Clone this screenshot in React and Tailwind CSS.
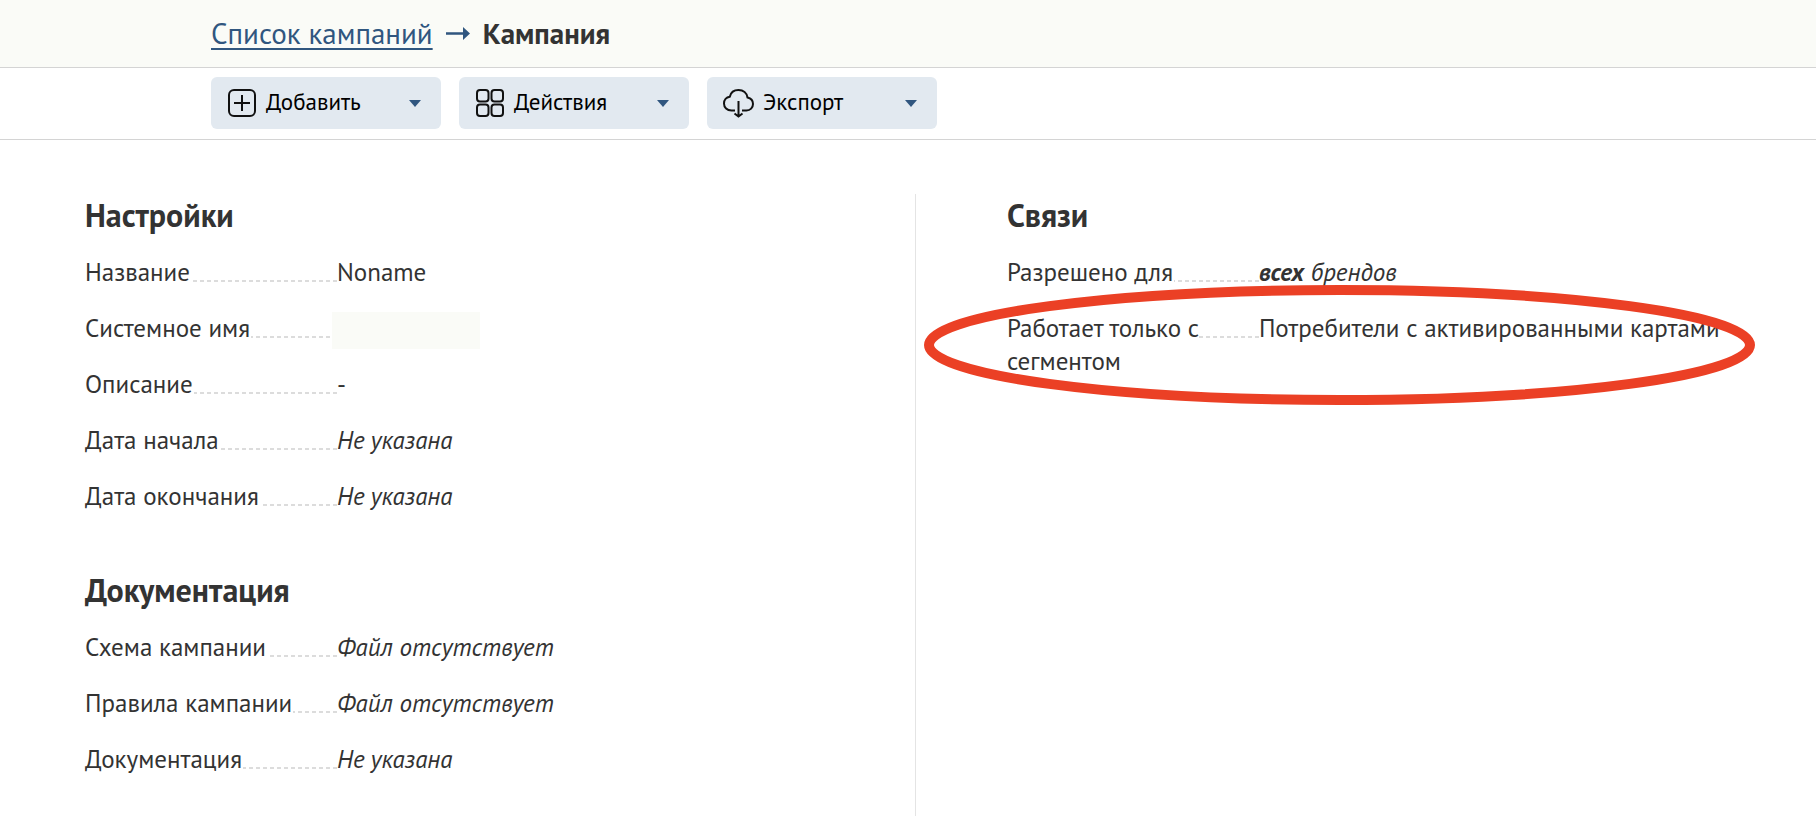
const settings = [
  { label: 'Название', value: 'Noname' },
  { label: 'Системное имя', hidden: true },
  { label: 'Описание', value: '-' },
  { label: 'Дата начала', value: <i>Не указана</i> },
  { label: 'Дата окончания', value: <i>Не указана</i> },
]

const docs = [
  { label: 'Схема кампании', value: <i>Файл отсутствует</i> },
  { label: 'Правила кампании', value: <i>Файл отсутствует</i> },
  { label: 'Документация', value: <i>Не указана</i> },
]

const links = [
  { label: 'Разрешено для', value: <i><b>всех</b> брендов</i> },
  {
    label: 'Работает только с сегментом',
    value: 'Потребители с активированными картами',
    marked: true,
  },
]

function AddIcon() {
  return (
    <svg width="30" height="30" viewBox="0 0 30 30" fill="none" stroke="#111" strokeWidth="2">
      <rect x="2" y="2" width="26" height="26" rx="5" />
      <path d="M15 7v16M7 15h16" />
    </svg>
  )
}

function GridIcon() {
  return (
    <svg width="30" height="30" viewBox="0 0 30 30" fill="none" stroke="#111" strokeWidth="2">
      <rect x="2" y="2" width="11.5" height="11.5" rx="3" />
      <rect x="16.5" y="2" width="11.5" height="11.5" rx="3" />
      <rect x="2" y="16.5" width="11.5" height="11.5" rx="3" />
      <rect x="16.5" y="16.5" width="11.5" height="11.5" rx="3" />
    </svg>
  )
}

function CloudIcon() {
  return (
    <svg width="31" height="30" viewBox="0 0 31 30" fill="none" stroke="#111" strokeWidth="2">
      <path d="M12 22.500H8.500C4 22.500 1 19.500 1 15.500c0-3.500 2.300-6.300 5.800-6.800C7.800 4.500 11.300 2 15.500 2c4.800 0 8.300 3 9 7.500 3.300.7 5.500 3.300 5.500 6.500 0 3.700-2.800 6.500-6.500 6.500H19" />
      <path d="M15.500 13v15.500M11.500 25.500l4 3 4-3" />
    </svg>
  )
}

function MenuButton({ icon, children }) {
  return (
    <button className="flex h-[52px] w-[230px] items-center gap-[9px] rounded-md bg-[#e2e9f0] pr-5 pl-4 text-[23px] text-black">
      {icon}
      <span className="flex-1 pb-[3px] text-left">{children}</span>
      <svg width="12" height="7" viewBox="0 0 12 7" fill="#30567f">
        <path d="M0 0h12L6 7z" />
      </svg>
    </button>
  )
}

function Row({ label, value, hidden, marked }) {
  return (
    <div className="relative flex">
      <dt className="w-[252px] shrink-0 bg-[repeating-linear-gradient(270deg,#dcdcdc_0_4px,transparent_4px_7px)] bg-[length:100%_2px] bg-[position:0_24px] bg-no-repeat">
        <span className="bg-white pr-px">{label}</span>
      </dt>
      <dd className="relative whitespace-nowrap">
        {value}
        {hidden && <span className="absolute top-0 -left-[5px] h-[37px] w-[148px] bg-[#fafbf7]" />}
      </dd>
      {marked && (
        <svg
          className="pointer-events-none absolute -top-[27px] -left-[83px]"
          width="831"
          height="120"
          viewBox="0 0 831 120"
          fill="none"
        >
          <ellipse cx="415.5" cy="60" rx="410.5" ry="55" stroke="#eb4025" strokeWidth="10" />
        </svg>
      )}
    </div>
  )
}

function Section({ title, rows }) {
  return (
    <section>
      <h2 className="mb-5 text-[32px] leading-[42px] font-bold">{title}</h2>
      <dl className="flex flex-col gap-[23px]">
        {rows.map((row) => (
          <Row key={row.label} {...row} />
        ))}
      </dl>
    </section>
  )
}

function App() {
  return (
    <div className="min-h-screen bg-white font-['PT_Sans','Noto_Sans',sans-serif] text-[25px] leading-[33px] text-[#333]">
      {/* Breadcrumbs */}
      <header className="flex h-[68px] items-center border-b border-[#d4d4d4] bg-[#fafbf7] pl-[211px] text-[29px]">
        <a href="#campaigns" className="text-[#30567f] underline decoration-2 underline-offset-4">
          Список кампаний
        </a>
        <svg className="mx-[13px]" width="24" height="13" viewBox="0 0 24 13" fill="#30567f">
          <path d="M0 5.250h17V0l7 6.500-7 6.500V7.750H0z" />
        </svg>
        <h1 className="font-bold">Кампания</h1>
      </header>

      {/* Toolbar */}
      <div className="flex h-[72px] items-start gap-[18px] border-b border-[#d4d4d4] pt-[9px] pl-[211px]">
        <MenuButton icon={<AddIcon />}>Добавить</MenuButton>
        <MenuButton icon={<GridIcon />}>Действия</MenuButton>
        <MenuButton icon={<CloudIcon />}>Экспорт</MenuButton>
      </div>

      {/* Content */}
      <main className="flex pt-[54px] pb-[11px] pl-[85px]">
        <div className="flex w-[48%] flex-col gap-14 border-r border-[#e4e4e4] pb-10">
          <Section title="Настройки" rows={settings} />
          <Section title="Документация" rows={docs} />
        </div>
        <div className="flex-1 pl-[91px]">
          <Section title="Связи" rows={links} />
        </div>
      </main>
    </div>
  )
}

export default App
